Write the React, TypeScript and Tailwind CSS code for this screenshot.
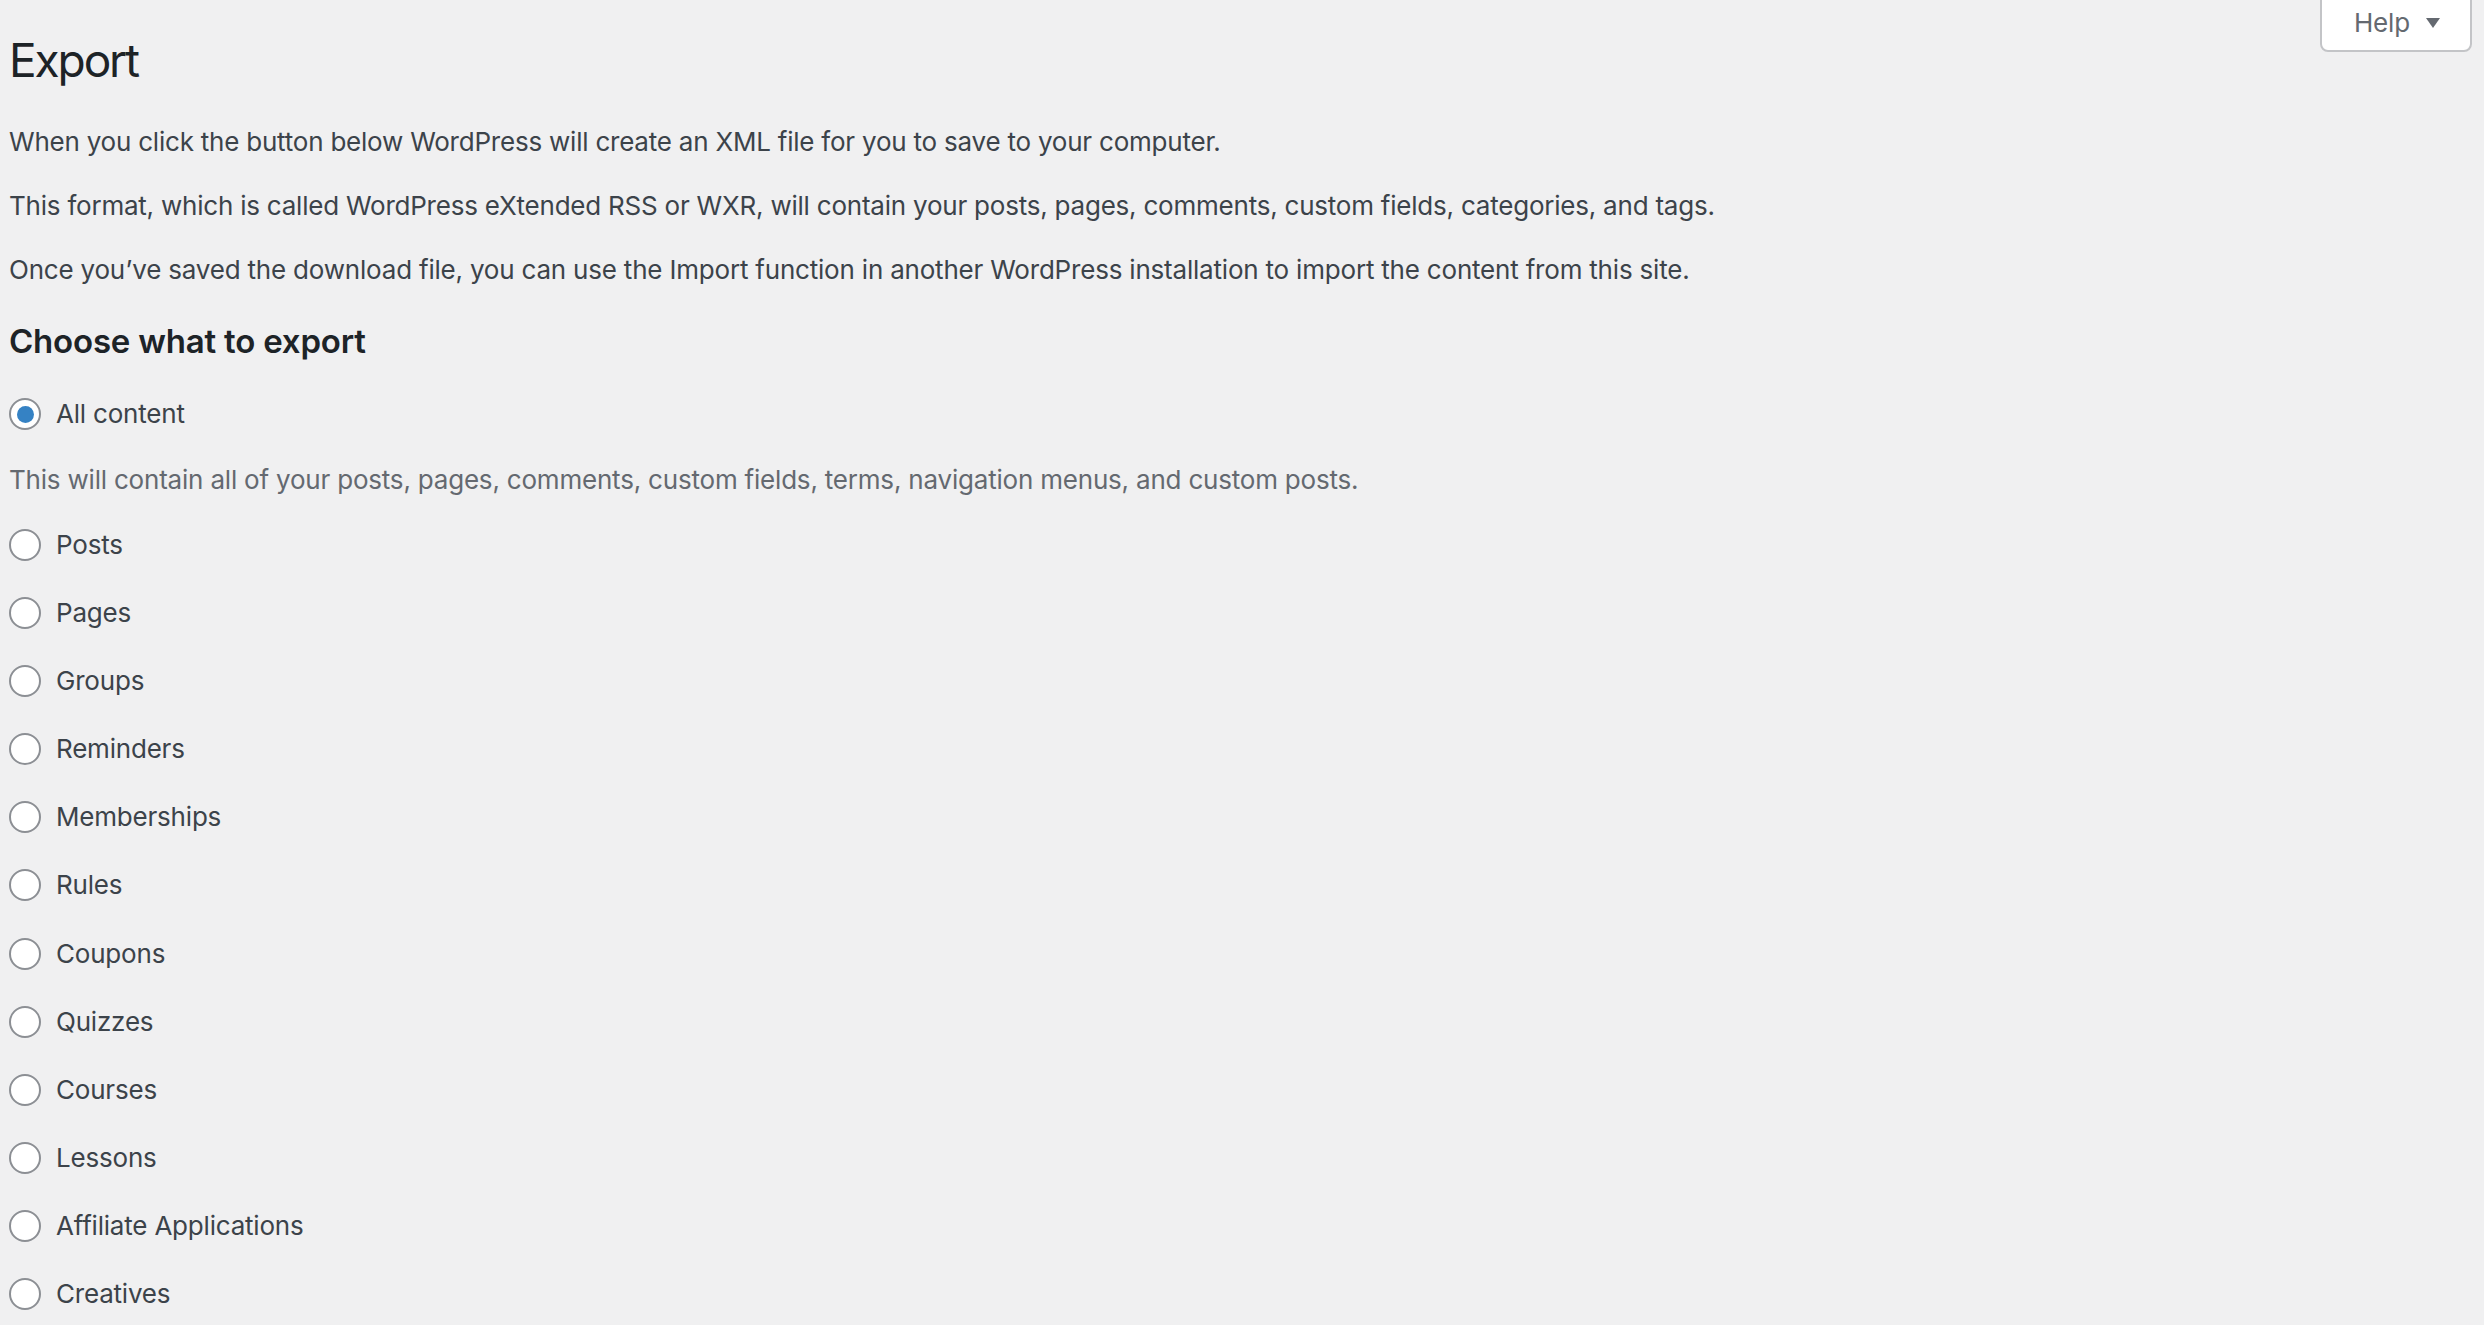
import React from 'react';

const types = [
  'Posts',
  'Pages',
  'Groups',
  'Reminders',
  'Memberships',
  'Rules',
  'Coupons',
  'Quizzes',
  'Courses',
  'Lessons',
  'Affiliate Applications',
  'Creatives',
];

const Radio: React.FC<{ checked?: boolean }> = ({ checked }) => (
  <span className="flex h-[32px] w-[32px] shrink-0 items-center justify-center rounded-full border-2 border-[#8c8f94] bg-white">
    {checked && <span className="h-[17px] w-[17px] rounded-full bg-[#3582c4]" />}
  </span>
);

const Option: React.FC<{ label: string; checked?: boolean }> = ({ label, checked }) => (
  <label className="flex h-[38px] items-center gap-[15px] text-[26px] leading-[38px] text-[#3c434a]">
    <Radio checked={checked} />
    <span>{label}</span>
  </label>
);

const App: React.FC = () => {
  return (
    <div className="relative min-h-screen overflow-hidden bg-[#f0f0f1] pl-[9px] font-['Inter',sans-serif] tracking-[-0.2px] text-[#3c434a]">
      {/* Help tab */}
      <button className="absolute right-[12px] top-[-2px] flex h-[54px] w-[152px] items-center gap-[16px] rounded-b-[8px] border-2 border-[#c3c4c7] bg-white pb-[5px] pl-[32px] text-[26px] text-[#646970]">
        <span>Help</span>
        <svg width="14" height="10" viewBox="0 0 14 10" className="mt-[1px]">
          <path d="M0 0 L14 0 L7 10 Z" fill="#646970" />
        </svg>
      </button>

      <div className="pt-[30px]">
        <h1 className="text-[46px] font-normal leading-[60px] tracking-[-2.1px] text-[#1d2327]">Export</h1>

        <p className="mt-[33px] text-[26px] leading-[38px] tracking-[-0.22px]">
          When you click the button below WordPress will create an XML file for you to save to your computer.
        </p>
        <p className="mt-[26px] text-[26px] leading-[38px] tracking-[-0.22px]">
          This format, which is called WordPress eXtended RSS or WXR, will contain your posts, pages, comments, custom fields, categories, and tags.
        </p>
        <p className="mt-[26px] text-[26px] leading-[38px]">
          Once you’ve saved the download file, you can use the Import function in another WordPress installation to import the content from this site.
        </p>

        <h2 className="mt-[30px] text-[33px] font-semibold leading-[44px] tracking-[-0.2px] text-[#1d2327]">Choose what to export</h2>

        <div className="mt-[32px]">
          <Option label="All content" checked />
        </div>
        <p className="mt-[27.5px] text-[26px] leading-[38px] text-[#646970]">
          This will contain all of your posts, pages, comments, custom fields, terms, navigation menus, and custom posts.
        </p>

        <div className="mt-[27.5px] flex flex-col gap-[30.1px] pb-[40px]">
          {types.map((t) => (
            <Option key={t} label={t} />
          ))}
        </div>
      </div>
    </div>
  );
};

export default App;
